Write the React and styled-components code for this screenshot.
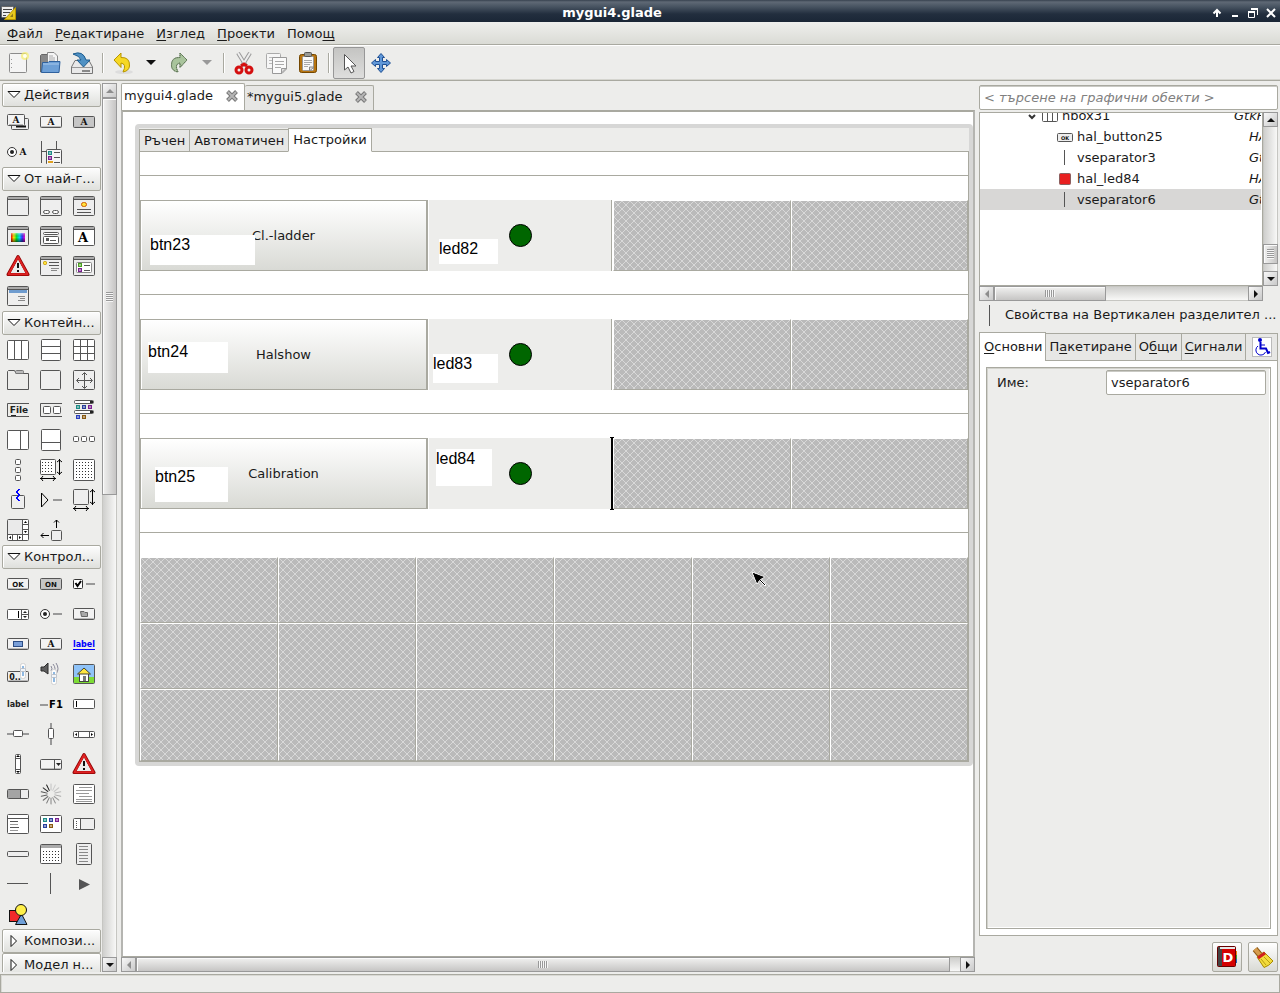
import React from "react";
import styled, { createGlobalStyle, css } from "styled-components";

const edge = "#a9a9a0";
const face = "#ededeb";
const raised = "linear-gradient(#ffffff, #d9dad5)";

const Global = createGlobalStyle`
  * { box-sizing: border-box; }
  body { margin: 0; background: ${face}; }
  body, button, input {
    font-family: "DejaVu Sans", sans-serif;
    font-size: 13px;
    line-height: 16px;
    color: #1a1a1a;
  }
  button { padding: 0; margin: 0; border: 0; background: none; cursor: default; }
  svg { display: block; flex: none; }
`;

/* ---------- window chrome ---------- */
const Window = styled.div`
  display: flex;
  flex-direction: column;
  height: 100vh;
  overflow: hidden;
  background: ${face};
`;
const TitleBar = styled.header`
  display: flex;
  align-items: center;
  height: 22px;
  flex: none;
  padding-top: 3px;
  background: linear-gradient(#37424f 0, #5f6975 2px, #465260 7px, #222e3e 14px, #1a2636 22px);
`;
const Title = styled.h1`
  flex: 1;
  margin: 0;
  text-align: center;
  font-size: 13px;
  font-weight: bold;
  color: #fff;
`;
const WindowButton = styled.button`
  display: grid;
  place-items: center;
  width: 18px;
  height: 18px;
`;
const MenuBar = styled.nav`
  display: flex;
  align-items: center;
  gap: 12px;
  height: 23px;
  flex: none;
  padding: 2px 0 0 7px;
  background: linear-gradient(#efefed, #dadbd5);
  border-bottom: 1px solid ${edge};
`;
const Mnemonic = styled.span`
  text-decoration: underline;
  text-underline-offset: 2px;
`;
const ToolBar = styled.div`
  display: flex;
  align-items: center;
  height: 36px;
  flex: none;
  padding: 0 2px;
  border-top: 1px solid #fff;
  border-bottom: 1px solid ${edge};
  box-shadow: inset 0 -1px #d5d5cf;
`;
const Tool = styled.button`
  display: grid;
  place-items: center;
  width: 32px;
  height: 32px;
  ${(p) => p.$on && css`
    background: linear-gradient(#c4c4c2, #dededd);
    border: 1px solid #979797;
    border-radius: 2px;
  `}
`;
const DropArrow = styled(Tool)`
  width: 24px;
`;
const ToolDivider = styled.i`
  width: 2px;
  height: 20px;
  margin: 0 3px 0 4px;
  background: ${edge};
  border-right: 1px solid #fff;
`;
const Main = styled.main`
  flex: 1;
  min-height: 0;
  display: flex;
  gap: 4px;
  padding: 2px 2px 0;
`;
const StatusBar = styled.footer`
  height: 19px;
  flex: none;
  margin-top: 2px;
  border: 1px solid ${edge};
  box-shadow: inset 1px 1px #d9d9d4;
`;

/* ---------- scroll bars ---------- */
const Track = styled.div`
  display: flex;
  flex: none;
  flex-direction: ${(p) => (p.$vertical ? "column" : "row")};
  ${(p) => (p.$vertical ? "width" : "height")}: 15px;
  background: linear-gradient(${(p) => (p.$vertical ? "to right" : "to bottom")}, #cfcfcd, #f8f8f7);
  border: 1px solid #c6c6c2;
`;
const Arrow = styled.button`
  display: grid;
  place-items: center;
  flex: none;
  width: 15px;
  height: 15px;
  margin: -1px;
  border: 1px solid #999;
  background: linear-gradient(135deg, #f8f8f8, #c9c9c9);
`;
const Thumb = styled.div`
  display: grid;
  place-items: center;
  flex: ${(p) => p.$grow};
  margin: ${(p) => (p.$vertical ? "1px -1px" : "-1px 1px")};
  border: 1px solid #999;
  box-shadow: inset 1px 1px #fbfbfb;
  background: linear-gradient(${(p) => (p.$vertical ? "to right" : "to bottom")}, #f1f1f0, #c6c5c4);
`;
const Grip = styled.i`
  ${(p) => p.$vertical
    ? css`width: 7px; height: 10px; background: repeating-linear-gradient(#999 0 1px, #f6f6f6 1px 2px);`
    : css`width: 10px; height: 7px; background: repeating-linear-gradient(to right, #999 0 1px, #f6f6f6 1px 2px);`}
`;
const Space = styled.i`
  flex: ${(p) => p.$grow};
`;
const arrowPath = {
  up: "M0 6L4 2L8 6Z",
  down: "M0 2L4 6L8 2Z",
  left: "M6 0L2 4L6 8Z",
  right: "M2 0L6 4L2 8Z",
};
function ArrowButton({ dir, off }) {
  return (
    <Arrow aria-label={dir}>
      <svg width="8" height="8"><path d={arrowPath[dir]} fill={off ? "#8d8d8d" : "#111"} /></svg>
    </Arrow>
  );
}
function ScrollBar({ vertical, before = 0, size, after, startOff = true }) {
  return (
    <Track $vertical={vertical}>
      <ArrowButton dir={vertical ? "up" : "left"} off={startOff} />
      {before > 0 && <Space $grow={before} />}
      <Thumb $vertical={vertical} $grow={size}><Grip $vertical={vertical} /></Thumb>
      <Space $grow={after} />
      <ArrowButton dir={vertical ? "down" : "right"} />
    </Track>
  );
}

/* ---------- palette ---------- */
const PaletteArea = styled.aside`
  display: flex;
  flex: none;
  width: 115px;
`;
const Palette = styled.div`
  width: 100px;
  overflow: hidden;
`;
const GroupButton = styled.button`
  display: flex;
  align-items: center;
  gap: 3px;
  width: 99px;
  height: 24px;
  padding: 0 4px;
  border: 1px solid ${edge};
  border-radius: 2px;
  box-shadow: inset 1px 1px #fff;
  background: linear-gradient(#fdfdfd, #dfe0dc);
  white-space: nowrap;
`;
const IconGrid = styled.div`
  display: grid;
  grid-template-columns: repeat(3, 33px);
  grid-auto-rows: 30px;
`;
const PaletteItem = styled.button`
  padding: 3px 4px;
`;

const g = "#555";
const R = (x, y, w, h, fill = "#eee", stroke = g, rx = 1) => (
  <rect x={x + 0.5} y={y + 0.5} width={w - 1} height={h - 1} fill={fill} stroke={stroke} rx={rx} />
);
const F = (x, y, w, h, fill = g) => <rect x={x} y={y} width={w} height={h} fill={fill} />;
const T = (x, y, s, t, fill = "#111", fam = "DejaVu Sans") => (
  <text x={x} y={y} fontSize={s} fontWeight="bold" fontFamily={fam} textAnchor="middle" fill={fill}>{t}</text>
);
const L = (d, stroke = g, w = 1) => <path d={d} fill="none" stroke={stroke} strokeWidth={w} />;
const Win = (fill = "#eee") => <>{R(1, 2, 22, 20, fill)}{F(2, 3, 20, 2, "#aaa")}{F(2, 5, 20, 1)}</>;
const Btn = (fill = "#f2f2f2") => <>{R(1, 6, 22, 12, fill)}{F(2, 16, 20, 1, "#bbb")}</>;
const Dots = (x, y, w, h) => {
  const out = [];
  for (let j = y; j < y + h; j += 3) for (let i = x; i < x + w; i += 3) out.push(<rect key={i + "-" + j} x={i} y={j} width="1" height="1" fill="#333" />);
  return out;
};
const Chip = (x, y, c) => <rect x={x + 0.5} y={y + 0.5} width="3" height="3" fill={c} fillOpacity="0.5" stroke={c} />;
const warning = (
  <>
    <path d="M12 2.5L22 20.5H2Z" fill="#e7e7e7" stroke="#8e0000" strokeWidth="3" strokeLinejoin="round" />
    <path d="M12 3L21.500 20.300H2.500Z" fill="none" stroke="#dd2222" strokeWidth="2" strokeLinejoin="round" />
    <path d="M12 6L18.500 18.500H5.500Z" fill="#ececec" />
    {F(11, 9, 2, 5, "#111")}{F(11, 16, 2, 2, "#111")}
  </>
);
const HArrows = (x1, x2, y) => L(`M${x1} ${y}.5H${x2}M${x1 + 3} ${y - 2}L${x1 + 1} ${y}.5L${x1 + 3} ${y + 3}M${x2 - 3} ${y - 2}L${x2 - 1} ${y}.5L${x2 - 3} ${y + 3}`, "#000");
const VArrows = (x, y1, y2) => L(`M${x}.5 ${y1}V${y2}M${x - 2} ${y1 + 3}L${x}.5 ${y1 + 1}L${x + 3} ${y1 + 3}M${x - 2} ${y2 - 3}L${x}.5 ${y2 - 1}L${x + 3} ${y2 - 3}`, "#000");
const chips = (x, y) => <>{Chip(x, y, "#1d8c86")}{Chip(x + 6, y, "#2a3f9d")}{Chip(x + 12, y, "#7a2090")}</>;
const slider = <>{R(14, 1, 6, 16, "#fcfcfc", "#d2d2d2", 2)}{F(16, 4, 2, 10, "#8fb9e2")}{R(14, 6, 6, 4, "#f2f5f9", "#b5bcc6")}</>;

const actions = [
  ["Action group", <>{R(5, 8, 18, 12)}{L("M10 16.500H20", "#111", 2)}{R(1, 4, 18, 12, "#f4f4f4")}{F(3, 14, 14, 1, "#bbb")}{T(10, 13, 9, "A", "#111", "DejaVu Serif")}</>],
  ["Action", <>{Btn()}{T(12, 15, 9, "A", "#111", "DejaVu Serif")}</>],
  ["Toggle action", <>{Btn("#c6c6c6")}{T(12, 15, 9, "A", "#111", "DejaVu Serif")}</>],
  ["Radio action", <><circle cx="6" cy="12" r="4.500" fill="#fff" stroke="#333" /><circle cx="6" cy="12" r="2" fill="#222" />{T(17, 15, 9, "A", "#111", "DejaVu Serif")}</>],
  ["Recent action", <>{L("M2.500 1V23M17.500 1V9M2.500 11.500H8")}{R(7, 9, 16, 16, "#f5f5f5")}{Chip(9, 11, "#1d8c86")}{Chip(9, 16, "#7a2090")}{F(9, 21, 5, 2, "#e0a020")}{F(15, 12, 6, 1)}{F(15, 17, 6, 1)}{F(15, 22, 6, 1)}</>],
];
const toplevels = [
  ["Window", Win()],
  ["Dialog", <>{Win()}{R(4, 16, 7, 4, "#fff", g, 2)}{R(13, 16, 7, 4, "#fff", g, 2)}</>],
  ["About dialog", <>{Win()}{R(9, 8, 6, 5, "#ffe23c", "#d05a00", 2)}{F(5, 15, 14, 1)}{F(5, 18, 14, 1)}</>],
  ["Color dialog", <>{Win()}<defs><linearGradient id="hue"><stop offset="0" stopColor="#f00" /><stop offset=".2" stopColor="#fe0" /><stop offset=".4" stopColor="#0e3" /><stop offset=".6" stopColor="#0df" /><stop offset=".8" stopColor="#33f" /><stop offset="1" stopColor="#f0c" /></linearGradient><linearGradient id="dark" x2="0" y2="1"><stop offset="0" stopColor="#fff" stopOpacity=".5" /><stop offset=".5" stopColor="#000" stopOpacity="0" /><stop offset="1" stopColor="#000" stopOpacity=".6" /></linearGradient></defs><rect x="5" y="9" width="14" height="9" fill="url(#hue)" /><rect x="5" y="9" width="14" height="9" fill="url(#dark)" /></>],
  ["File dialog", <>{Win()}{R(4, 8, 16, 3, "#fff")}{R(4, 12, 16, 8, "#fff")}{F(7, 14, 3, 3)}{F(11, 16, 6, 1)}</>],
  ["Font dialog", <>{Win("#fff")}{T(11, 18, 13, "A", "#000", "DejaVu Serif")}</>],
  ["Message dialog", warning],
  ["Recent dialog", <>{Win()}{R(4, 7, 4, 4, "#ffe23c", "#c79a00")}{F(10, 8, 10, 1)}{F(10, 11, 10, 1)}{F(12, 14, 8, 1, "#888")}{F(12, 16, 6, 1, "#888")}</>],
  ["Chooser dialog", <>{Win()}{R(4, 8, 16, 11, "#fff", "#888")}{Chip(6, 9, "#4aa020")}{Chip(6, 14, "#7a2090")}{F(12, 11, 6, 1)}{F(12, 16, 6, 1)}</>],
  ["Assistant", <>{Win()}{F(3, 6, 18, 3, "#6f9ccf")}{F(12, 12, 7, 1, "#888")}{F(14, 14, 5, 1, "#888")}{F(12, 16, 7, 1, "#888")}</>],
];
const containers = [
  ["Horizontal box", <>{R(1, 2, 22, 20, "#fff")}{L("M8.500 2V22M15.500 2V22")}</>],
  ["Vertical box", <>{R(2, 1, 20, 22, "#fff")}{L("M2 8.500H22M2 15.500H22")}</>],
  ["Table", <>{R(1, 1, 22, 22, "#fff")}{L("M8.500 1V23M15.500 1V23M1 8.500H23M1 15.500H23")}</>],
  ["Notebook", <>{L("M1.500 21V3.500L2.500 2.500H8.500L10 5.500H22.500V21.500H1.500Z")}{R(9, 2, 9, 4, "#bbb", "#777")}</>],
  ["Frame", R(1, 2, 21, 20)],
  ["Aspect frame", <>{R(1, 2, 22, 20)}{L("M12.500 5V20M5 12.500H20M10 7L12.500 4.500L15 7M10 18L12.500 20.500L15 18M7 10L4.500 12.500L7 15M18 10L20.500 12.500L18 15")}</>],
  ["Menu bar", <>{L("M23 5.500H1.500V18.500H23")}{T(13, 15, 9, "File", "#222")}{F(5, 17, 5, 1, "#222")}</>],
  ["Tool bar", <>{L("M23 5.500H1.500V18.500H23")}{R(4, 8, 8, 8, "#fff")}{R(14, 8, 8, 8, "#fff")}</>],
  ["Tool palette", <>{R(2, 2, 20, 4, "#fff")}{F(18, 3, 3, 2, "#222")}{chips(4, 7)}{R(2, 12, 20, 4, "#fff")}{F(18, 13, 3, 2, "#222")}{Chip(4, 17, "#2a3fbd")}{Chip(10, 17, "#8a5a10")}</>],
  ["Horizontal panes", <>{R(1, 2, 22, 20, "#fff")}{L("M14.500 2V22")}</>],
  ["Vertical panes", <>{R(2, 1, 20, 22, "#fff")}{L("M2 14.500H22")}</>],
  ["Horizontal button box", <>{R(1, 8, 6, 6, "#fff")}{R(9, 8, 6, 6, "#fff")}{R(17, 8, 6, 6, "#fff")}</>],
  ["Vertical button box", <>{R(9, 1, 6, 6, "#fff")}{R(9, 9, 6, 6, "#fff")}{R(9, 17, 6, 6, "#fff")}</>],
  ["Layout", <>{R(1, 1, 16, 16, "#fff")}{Dots(3, 4, 12, 12)}{HArrows(1, 17, 20)}{VArrows(20, 1, 17)}</>],
  ["Fixed", <>{R(1, 1, 22, 22, "#fff")}{Dots(4, 4, 17, 17)}</>],
  ["Event box", <>{R(5, 7, 14, 14)}{L("M13 1L10 4L13 7L10 10L13 13", "#00f", 1)}{L("M14 1L11 4L14 7L11 10L14 13", "#00f", 1)}</>],
  ["Expander", <>{L("M2.500 5V19L9 12Z", "#000")}{F(14, 11, 9, 2, "#999")}</>],
  ["Viewport", <>{R(1, 1, 16, 16)}{HArrows(1, 17, 20)}{VArrows(20, 1, 17)}</>],
  ["Scrolled window", <>{R(1, 1, 22, 22, "#fff")}{F(2, 2, 14, 14, "#eaeaea")}{L("M16.500 1V23M1 16.500H23M16.500 6.500H22M16.500 11.500H22M6.500 17V23M11.500 17V23")}<path d="M19.500 3L21 5H18ZM19.500 15L21 13H18ZM3 19.500L5 18V21ZM15 19.500L13 18V21Z" fill="#000" /></>],
  ["Alignment", <>{R(12, 12, 11, 11)}{L("M17.500 10V2M15 4.500L17.500 2L20 4.500M10 17.500H2M4.500 15L2 17.500L4.500 20", "#000")}</>],
];
const controls = [
  ["Button", <>{Btn()}{T(12, 15, 7, "OK")}</>],
  ["Toggle button", <>{Btn("#c6c6c6")}{T(12, 15, 7, "ON")}</>],
  ["Check button", <>{R(1, 7, 10, 10, "#fff", "#333")}{L("M3.500 11L5.500 14L9 9", "#000", 2)}{F(14, 11, 9, 2, "#999")}</>],
  ["Spin button", <>{R(1, 7, 22, 11, "#fff")}{F(12, 9, 1, 7, "#000")}{L("M15.500 7V18M15.500 12.500H23")}<path d="M17 11L19 9L21 11ZM17 14L19 16L21 14Z" fill="#222" /></>],
  ["Radio button", <><circle cx="6" cy="12" r="4.500" fill="#fff" stroke="#333" /><circle cx="6" cy="12" r="2" fill="#222" />{F(14, 11, 9, 2, "#999")}</>],
  ["File chooser button", <>{Btn()}<path d="M8.500 9.500H12L13 10.500H15.500V14.500H9.500Z" fill="#aaa" stroke="#666" /></>],
  ["Color button", <>{Btn()}{R(7, 9, 10, 6, "#7a9fd8", "#2c4d85", 0)}</>],
  ["Font button", <>{Btn()}{T(12, 15, 9, "A", "#111", "DejaVu Serif")}</>],
  ["Link button", <>{T(12, 15, 8, "label", "#00f")}{F(1, 17, 22, 1, "#00f")}</>],
  ["Scale button", <>{R(1, 9, 22, 11)}{F(2, 18, 20, 1, "#bbb")}{T(9, 18, 8, "0..")}{slider}</>],
  ["Volume button", <><path d="M2 5H5L9 1V12L5 9H2Z" fill="#5f5f5f" stroke="#2d2d2d" />{L("M12 4Q14 7 12 9M14 2Q18 7 14 11M17 1Q21 7 17 12", "#889")}<g transform="translate(-2 6)">{slider}</g></>],
  ["Image", <>{R(1, 2, 22, 20, "#8fc3f8")}{F(2, 15, 20, 6, "#7ddc36")}{R(7, 11, 10, 9, "#fff", "#444", 0)}<path d="M5.500 12L12 6L18.500 12Z" fill="#ffe640" stroke="#443" />{F(11, 14, 3, 5, "#777")}</>],
  ["Label", T(12, 15, 8, "label", "#222")],
  ["Accelerator label", <>{F(1, 12, 8, 2, "#999")}{T(17, 16, 10, "F1", "#000")}</>],
  ["Text entry", <>{R(1, 7, 22, 10, "#fff")}{F(4, 9, 1, 6, "#000")}</>],
  ["Horizontal scale", <>{F(1, 11, 22, 2, "#999")}{R(7, 8, 10, 7, "#fff")}</>],
  ["Vertical scale", <>{F(11, 1, 2, 22, "#999")}{R(9, 6, 6, 11, "#fff")}</>],
  ["Horizontal scrollbar", <>{R(1, 9, 22, 7, "#fff")}{L("M6.500 9V16M17.500 9V16")}<path d="M3 12.500L5 11V14ZM21 12.500L19 11V14Z" fill="#000" /></>],
  ["Vertical scrollbar", <>{R(9, 2, 6, 20, "#fff")}{L("M9 6.500H15M9 17.500H15")}<path d="M12 3L14 5H10ZM12 21L14 19H10Z" fill="#000" /></>],
  ["Combo box", <>{R(1, 7, 22, 11, "#f2f2f2")}{F(2, 16, 20, 1, "#bbb")}{L("M15.500 7V18")}<path d="M17 11H22L19.500 14Z" fill="#222" /></>],
  ["Info bar", warning],
  ["Progress bar", <>{R(1, 7, 22, 10)}{F(2, 8, 12, 8, "#a4a4a4")}{L("M14.500 7V17")}</>],
  ["Spinner", <g strokeLinecap="round">{[0, 1, 2, 3, 4, 5, 6, 7, 8, 9, 10, 11, 12, 13].map((i) => <path key={i} d="M12 8V2" stroke={`hsl(0 0% ${[76, 80, 78, 72, 66, 60, 56, 52, 48, 44, 38, 30, 20, 10][i]}%)`} strokeWidth="1" transform={`rotate(${i * 25.7} 12 12)`} />)}</g>],
  ["Text view", <>{R(1, 2, 22, 20, "#fff")}{F(7, 5, 13, 1, "#999")}{F(4, 8, 16, 1, "#999")}{F(4, 11, 13, 1, "#999")}{F(7, 14, 13, 1, "#999")}{F(4, 17, 16, 1, "#999")}{F(4, 19, 16, 1, "#999")}</>],
  ["Tree view", <>{R(1, 2, 22, 20, "#fff")}{L("M1 6.500H23")}{F(4, 9, 8, 1)}{F(4, 12, 8, 1, "#999")}{F(4, 15, 9, 1)}{F(4, 18, 8, 1, "#999")}</>],
  ["Icon view", <>{R(1, 3, 22, 18, "#fff")}{chips(4, 6)}{Chip(4, 12, "#2a3f9d")}{Chip(10, 12, "#8a5a10")}</>],
  ["Handle box", <>{R(1, 6, 22, 12)}{F(2, 7, 6, 10, "#fff")}{L("M8.500 6V18")}{F(4, 9, 1, 1)}{F(4, 11, 1, 1)}{F(4, 13, 1, 1)}{F(4, 15, 1, 1)}</>],
  ["Status bar", R(1, 9, 22, 6)],
  ["Calendar", <>{R(1, 2, 22, 20, "#fff")}{F(2, 3, 20, 3, "#aaa")}{Dots(4, 9, 17, 11)}</>],
  ["Popup menu", <>{R(4, 1, 16, 22)}{[4, 7, 10, 13, 16, 19].map((y) => <rect key={y} x="7" y={y} width="9" height="1" fill="#888" />)}</>],
  ["Horizontal separator", F(1, 11, 21, 1)],
  ["Vertical separator", F(11, 1, 1, 21)],
  ["Arrow", <path d="M7 7V18L18 12.500Z" fill={g} />],
  ["Drawing area", <>{R(3, 8, 12, 12, "#f02a2a", "#111", 0)}<path d="M15.500 12L21 22.500H9.500Z" fill="#6f9fd8" stroke="#111" /><circle cx="15" cy="8" r="5.500" fill="#fff04a" stroke="#111" /></>],
];
const groups = [
  ["Действия", actions],
  ["От най-г...", toplevels],
  ["Контейн...", containers],
  ["Контрол...", controls],
  ["Компози...", null],
  ["Модел н...", null],
];

function PaletteGroup({ name, items }) {
  return (
    <section>
      <GroupButton aria-expanded={!!items}>
        <svg width="14" height="14"><path d={items ? "M1 3.500H13L7 9.500Z" : "M4 1.500V12.500L9.500 7Z"} fill="#fff" stroke="#111" /></svg>
        {name}
      </GroupButton>
      {items && (
        <IconGrid>
          {items.map(([label, art]) => (
            <PaletteItem key={label} aria-label={label}>
              <svg width="24" height="24" viewBox="0 0 24 24">{art}</svg>
            </PaletteItem>
          ))}
        </IconGrid>
      )}
    </section>
  );
}

/* ---------- project workspace ---------- */
const Workspace = styled.section`
  flex: 1;
  min-width: 0;
  display: flex;
  flex-direction: column;
`;
const FileTabs = styled.div`
  display: flex;
  align-items: flex-end;
  height: 27px;
  flex: none;
`;
const FileTab = styled.div`
  display: flex;
  align-items: center;
  gap: 12px;
  height: ${(p) => (p.$active ? 27 : 25)}px;
  padding: 0 5px 2px 2px;
  border: 1px solid ${edge};
  border-left-width: ${(p) => (p.$active ? 1 : 0)}px;
  border-bottom: 0;
  border-radius: 2px 2px 0 0;
  background: ${(p) => (p.$active ? "#fff" : "#e7e7e5")};
`;
const TabName = styled.button``;
const CloseButton = styled.button`
  display: grid;
  place-items: center;
  width: 14px;
  height: 16px;
`;
const Viewport = styled.div`
  flex: 1;
  min-height: 0;
  display: flex;
  flex-direction: column;
  border: solid ${edge};
  border-width: 2px 2px 1px;
  border-color: ${edge} #b5b5b1;
`;
const Canvas = styled.div`
  position: relative;
  flex: 1;
  min-height: 0;
  overflow: hidden;
  padding: 12px 0 0 12px;
  background: #fff;
`;
const DesignWindow = styled.div`
  border: 4px solid #d7d7d6;
  border-radius: 4px;
  background: #fff;
`;
const DesignTabs = styled.div`
  display: flex;
  align-items: flex-end;
  height: 24px;
  background: ${face};
  box-shadow: inset 0 -1px ${edge};
`;
const DesignTab = styled.button`
  height: ${(p) => (p.$active ? 24 : 23)}px;
  padding: 0 4px;
  border: 1px solid ${edge};
  border-bottom-color: ${(p) => (p.$active ? "#fff" : edge)};
  border-right-width: ${(p) => (p.$active ? 1 : 0)}px;
  background: ${(p) => (p.$active ? "#fff" : "#e7e7e5")};
`;
const DesignPage = styled.div`
  border: 1px solid ${edge};
  border-top: 0;
`;
const Rule = styled.hr`
  height: 1px;
  margin: 0;
  border: 0;
  background: ${edge};
`;
const RuleSlot = styled.div`
  padding: 23px 0 24px;
`;
const HalRow = styled.div`
  display: grid;
  grid-template-columns: 287fr 2px 182fr 2px 178fr 177fr;
  height: 71px;
`;
const Cell = styled.div`
  position: relative;
  display: grid;
  background: ${face};
`;
const HalButton = styled.button`
  border: 1px solid ${edge};
  box-shadow: inset 1px 1px #fff;
  background: ${raised};
`;
const Led = styled.i`
  place-self: center;
  width: 23px;
  height: 23px;
  border: 1px solid #000;
  border-radius: 50%;
  background: #006600;
`;
const Note = styled.span`
  position: absolute;
  left: ${(p) => p.$x}px;
  top: ${(p) => p.$y}px;
  width: ${(p) => p.$w}px;
  height: ${(p) => p.$h}px;
  background: #fff;
  color: #000;
  font-family: "Liberation Sans", sans-serif;
  font-size: 16px;
  line-height: 20px;
`;
const Separator = styled.i`
  position: relative;
  background: ${edge};
  border-right: 1px solid #fff;
  ${(p) => p.$selected && css`
    &::after {
      content: "";
      position: absolute;
      top: -1px;
      bottom: -1px;
      left: -1px;
      width: 4px;
      background:
        linear-gradient(#000, #000) 0 0 / 4px 1px no-repeat,
        linear-gradient(#000, #000) 0 100% / 4px 1px no-repeat,
        linear-gradient(#000, #000) 1px 0 / 2px 100% no-repeat;
    }
  `}
`;
const Placeholder = styled.div`
  border: 1px solid;
  border-color: #fff ${edge} ${edge} #fff;
  background:
    linear-gradient(45deg, transparent 46%, #d8d8d8 46% 54%, transparent 54%) 0 0 / 8px 8px,
    linear-gradient(135deg, transparent 46%, #d8d8d8 46% 54%, transparent 54%) 0 0 / 8px 8px,
    #bababa;
`;
const EmptyTable = styled.div`
  display: grid;
  grid-template-columns: repeat(6, 1fr);
  grid-template-rows: 66px 66px 72px;
`;
const Pointer = styled.svg`
  position: absolute;
  left: 628px;
  top: 459px;
`;

const halRows = [
  { label: "Cl.-ladder", button: ["btn23", 10, 35, 105, 30], led: ["led82", 10, 39, 59, 25] },
  { label: "Halshow", button: ["btn24", 8, 23, 80, 31], led: ["led83", 4, 35, 65, 29] },
  { label: "Calibration", button: ["btn25", 15, 29, 73, 35], led: ["led84", 7, 11, 56, 37], selected: true },
];
function Annotation({ data: [text, x, y, w, h] }) {
  return <Note $x={x} $y={y} $w={w} $h={h}>{text}</Note>;
}
function CloseTab({ name }) {
  return (
    <CloseButton aria-label={`Close ${name}`}>
      <svg width="12" height="12"><path d="M1.500 1.500L10.500 10.500M10.500 1.500L1.500 10.500" stroke="#777" strokeWidth="4" /><path d="M2 2L10 10M10 2L2 10" stroke="#b5b5b5" strokeWidth="2" /></svg>
    </CloseButton>
  );
}

/* ---------- inspector ---------- */
const Inspector = styled.aside`
  display: flex;
  flex-direction: column;
  flex: none;
  width: 299px;
  padding-top: 2px;
`;
const Entry = styled.input`
  width: 100%;
  min-width: 0;
  height: 25px;
  padding: 0 4px;
  border: 1px solid ${edge};
  border-radius: 2px;
  box-shadow: inset 0 1px #c9c9c4;
  background: #fff;
  outline: 0;
  &::placeholder { color: #808080; opacity: 1; font-style: italic; }
`;
const TreeArea = styled.div`
  display: grid;
  grid-template-columns: 1fr 15px;
  grid-template-rows: 174px 15px;
  margin-top: 2px;
`;
const TreeBox = styled.div`
  overflow: hidden;
  padding-right: 1px;
  border: 1px solid ${edge};
  background: #fff;
`;
const TreeList = styled.ul`
  margin: -8px 0 0;
  padding: 0;
  list-style: none;
  overflow: hidden;
`;
const TreeRow = styled.li`
  display: flex;
  align-items: center;
  gap: 4px;
  height: 21px;
  padding-left: ${(p) => (p.$parent ? 46 : 77)}px;
  background: ${(p) => (p.$selected ? "#d8d7d6" : "transparent")};
`;
const TreeName = styled.span`
  flex: none;
  width: 168px;
`;
const TreeType = styled.span`
  flex: none;
  font-style: italic;
`;
const PropsTitle = styled.h2`
  display: flex;
  align-items: center;
  gap: 4px;
  height: 27px;
  flex: none;
  margin: 0;
  font-size: 13px;
  font-weight: normal;
  white-space: nowrap;
`;
const PropTabs = styled.div`
  display: flex;
  align-items: flex-end;
  height: 29px;
  flex: none;
  margin-top: 4px;
`;
const PropTab = styled.button`
  display: grid;
  place-items: center;
  height: ${(p) => (p.$active ? 29 : 28)}px;
  padding: 0 3px;
  white-space: nowrap;
  border: 1px solid ${edge};
  border-left-width: ${(p) => (p.$active ? 1 : 0)}px;
  border-bottom: ${(p) => (p.$active ? "0" : `1px solid ${edge}`)};
  background: ${(p) => (p.$active ? "#fff" : "#e7e7e5")};
  ${(p) => p.$active && "padding-left: 4px;"}
  flex: ${(p) => (p.$fill ? "1" : "none")};
`;
const TabLabel = styled.span`
  display: block;
`;
const PropPage = styled.div`
  flex: 1;
  display: flex;
  padding: 6px;
  border: 1px solid ${edge};
  border-top: 0;
  background: #fff;
`;
const PropFrame = styled.div`
  flex: 1;
  padding: 2px 4px 2px 10px;
  border: 1px solid ${edge};
  box-shadow: inset 1px 1px #d2d2cc, inset -1px -1px #fff;
  background: ${face};
`;
const Field = styled.label`
  display: grid;
  grid-template-columns: 1fr 160px;
  align-items: center;
`;
const ActionRow = styled.div`
  display: flex;
  justify-content: flex-end;
  gap: 6px;
  flex: none;
  padding-top: 6px;
`;
const ActionButton = styled.button`
  display: grid;
  place-items: center;
  width: 30px;
  height: 30px;
  border: 1px solid ${edge};
  border-radius: 2px;
  background: ${raised};
`;

const treeRows = [
  ["hbox31", "GtkHBox", "hbox"],
  ["hal_button25", "HAL_Button", "button"],
  ["vseparator3", "GtkVSeparator", "line"],
  ["hal_led84", "HAL_LED", "led"],
  ["vseparator6", "GtkVSeparator", "line"],
];
const treeIcons = {
  hbox: <>{R(0, 3, 16, 11, "#fff")}{L("M5.500 3V14M10.500 3V14")}</>,
  button: <>{R(0, 4, 16, 9)}{T(8, 11, 5, "OK")}</>,
  line: F(7, 0, 1, 15),
  led: R(2, 2, 12, 12, "#e82020", "#8a6060"),
};

const icons = {
  fresh: <>{R(3, 2, 18, 20, "#f4f4f4", "#8b8b8b")}{F(5, 8, 1, 1, "#999")}{F(5, 12, 1, 1, "#999")}{F(5, 16, 1, 1, "#999")}<circle cx="19" cy="5" r="4" fill="#f7ee6a" opacity=".7" /><circle cx="19" cy="5" r="2" fill="#fffff0" /></>,
  open: <><path d="M2.500 21V4.500L3.500 3.500H10V20Z" fill="#888" stroke="#666" /><path d="M9.500 12V1.500H16L19.500 5V12Z" fill="#f5f5f5" stroke="#888" />{L("M11 5H15M11 7H17M11 9H17", "#aaa")}<path d="M4.500 11.500L10 11.500L11 10.500H22L21 21.500H3.500Z" fill="#6d9fd6" stroke="#2f619e" />{L("M5 13H21", "#a8c8ec")}</>,
  save: <><path d="M5 9.500H19L22.500 16V22.500H1.500V16Z" fill="#e9e9e9" stroke="#777" />{L("M2 16.500H22", "#999")}{L("M12 20H20", "#888", 2)}<path d="M3 3Q13 -1 16 9H20L13.500 16L7 9H11Q10 5 3 3Z" fill="#4f91c4" stroke="#1c5c8f" /></>,
  undo: <><ellipse cx="13" cy="21" rx="9" ry="2" fill="#ddd" /><path d="M3 9L10 2V6.500Q19 6 18.500 15Q18 20 12 21Q16 13 10 12V16.500Z" fill="#f6d824" stroke="#b79500" /></>,
  redo: <><path d="M20 9L13 2V6.500Q4 6 4.500 15Q5 20 11 21Q7 13 13 12V16.500Z" fill="#a9c49c" stroke="#8a9a82" /><path d="M20 9L13 2V6.500Q4 6 4.500 15Q5 20 11 21Q7 13 13 12V16.500Z" fill="none" stroke="#4d6a42" strokeDasharray="1 1" /></>,
  cut: <>{L("M6 2L14 15", "#999", 4)}{L("M18 2L10 15", "#999", 4)}{L("M6 2L14 15M18 2L10 15", "#eee", 2)}<circle cx="7" cy="19" r="3" fill="none" stroke="#d40f0f" strokeWidth="3" /><circle cx="17" cy="19" r="3" fill="none" stroke="#d40f0f" strokeWidth="3" />{L("M9 15L12 13L15 15", "#d40f0f", 3)}</>,
  copy: <>{R(2, 2, 15, 16, "#f6f6f6", "#aaa")}{L("M5 6.500H13M5 9.500H10M5 12.500H10", "#bbb")}<path d="M8.500 6.500H22.500V18L18 22.500H8.500Z" fill="#fafafa" stroke="#999" />{L("M11 10.500H20M11 13.500H20M11 16.500H17", "#aaa")}<path d="M17.500 22V17.500H22Z" fill="#ddd" stroke="#999" /></>,
  paste: <>{R(3, 3, 18, 19, "#b77410", "#744700", 2)}{R(6, 5, 12, 15, "#fafafa", "#999")}{R(8, 1, 8, 5, "#999a95", "#555")}{L("M8 9.500H16M8 11.500H16M8 13.500H14M8 15.500H12", "#aaa")}<path d="M13.500 20V16H18Z" fill="#ddd" stroke="#888" /></>,
  pick: <path d="M7.500 3.500V19L11 16L14 22L17 20.500L14 15H19Z" fill="#fff" stroke="#555" />,
  move: <path d="M12 2.500L15.500 6.500H13.500V10.500H17.500V8.500L21.500 12L17.500 15.500V13.500H13.500V17.500H15.500L12 21.500L8.500 17.500H10.500V13.500H6.500V15.500L2.500 12L6.500 8.500V10.500H10.500V6.500H8.500Z" fill="#5f97d8" stroke="#1e4f93" />,
};
const Icon = ({ name }) => <svg width="24" height="24" viewBox="0 0 24 24">{icons[name]}</svg>;
const Drop = ({ off }) => <svg width="10" height="6"><path d="M0 0H10L5 5Z" fill={off ? "#999" : "#111"} /></svg>;

const menus = [["", "Ф", "айл"], ["", "Р", "едактиране"], ["", "И", "зглед"], ["", "П", "роекти"], ["Помо", "щ", ""]];
const Access = ({ parts: [a, b, c] }) => <TabLabel>{a}<Mnemonic>{b}</Mnemonic>{c}</TabLabel>;

export default function App() {
  return (
    <Window>
      <Global />
      <TitleBar>
        <svg width="16" height="16">{R(1, 1, 13, 12, "#eee", "#666")}{L("M3 4.500H12M3 7.500H10M3 10.500H6", "#444")}<path d="M15.500 2.500V14.500H4.500Z" fill="#e8c91e" stroke="#b89600" /><path d="M13 8.500V12H10Z" fill="#8f7b1c" /></svg>
        <Title>mygui4.glade</Title>
        <WindowButton aria-label="Shade"><svg width="10" height="10">{L("M5 9V2M1.500 5.500L5 2L8.500 5.500", "#fff", 2)}</svg></WindowButton>
        <WindowButton aria-label="Minimize"><svg width="10" height="10">{F(2, 7, 6, 2, "#fff")}</svg></WindowButton>
        <WindowButton aria-label="Restore"><svg width="10" height="10">{F(3, 0, 7, 2, "#fff")}{F(9, 0, 1, 7, "#fff")}{F(0, 3, 7, 2, "#fff")}{L("M0.500 3V9.500H6.500V3", "#fff")}</svg></WindowButton>
        <WindowButton aria-label="Close"><svg width="10" height="10">{L("M1 1L9 9M9 1L1 9", "#fff", 2)}</svg></WindowButton>
      </TitleBar>

      <MenuBar>
        {menus.map((m) => <button key={m.join("")}><Access parts={m} /></button>)}
      </MenuBar>

      <ToolBar>
        <Tool aria-label="New"><Icon name="fresh" /></Tool>
        <Tool aria-label="Open"><Icon name="open" /></Tool>
        <Tool aria-label="Save"><Icon name="save" /></Tool>
        <ToolDivider />
        <Tool aria-label="Undo"><Icon name="undo" /></Tool>
        <DropArrow aria-label="Undo list"><Drop /></DropArrow>
        <Tool aria-label="Redo"><Icon name="redo" /></Tool>
        <DropArrow aria-label="Redo list"><Drop off /></DropArrow>
        <ToolDivider />
        <Tool aria-label="Cut"><Icon name="cut" /></Tool>
        <Tool aria-label="Copy"><Icon name="copy" /></Tool>
        <Tool aria-label="Paste"><Icon name="paste" /></Tool>
        <ToolDivider />
        <Tool aria-label="Select" aria-pressed="true" $on><Icon name="pick" /></Tool>
        <Tool aria-label="Drag and resize"><Icon name="move" /></Tool>
      </ToolBar>

      <Main>
        <PaletteArea>
          <Palette>
            {groups.map(([name, items]) => <PaletteGroup key={name} name={name} items={items} />)}
          </Palette>
          <ScrollBar vertical size={396} after={463} />
        </PaletteArea>

        <Workspace>
          <FileTabs>
            <FileTab $active><TabName>mygui4.glade</TabName><CloseTab name="mygui4.glade" /></FileTab>
            <FileTab><TabName>*mygui5.glade</TabName><CloseTab name="mygui5.glade" /></FileTab>
          </FileTabs>
          <Viewport>
            <Canvas>
              <DesignWindow>
                <DesignTabs>
                  <DesignTab>Ръчен</DesignTab>
                  <DesignTab>Автоматичен</DesignTab>
                  <DesignTab $active>Настройки</DesignTab>
                </DesignTabs>
                <DesignPage>
                  <RuleSlot><Rule /></RuleSlot>
                  {halRows.map((row) => (
                    <React.Fragment key={row.label}>
                      <HalRow>
                        <Cell><HalButton>{row.label}</HalButton><Annotation data={row.button} /></Cell>
                        <Separator />
                        <Cell><Led /><Annotation data={row.led} /></Cell>
                        <Separator $selected={row.selected} />
                        <Placeholder />
                        <Placeholder />
                      </HalRow>
                      <RuleSlot><Rule /></RuleSlot>
                    </React.Fragment>
                  ))}
                  <EmptyTable>
                    {Array.from({ length: 18 }, (_, i) => <Placeholder key={i} />)}
                  </EmptyTable>
                </DesignPage>
              </DesignWindow>
              <Pointer width="18" height="18" viewBox="0 0 18 18">
                <path d="M1 1L6 13L8.500 9.500L14 15L15 14L9.500 8.500L13.500 6Z" fill="#000" stroke="#fff" />
                <path d="M2 2L6 12L8 9L9 8L13 6Z" fill="#000" />
                <path d="M8 8L14 14" stroke="#000" />
              </Pointer>
            </Canvas>
          </Viewport>
          <ScrollBar size={813} after={10} />
        </Workspace>

        <Inspector>
          <Entry aria-label="Търсене" placeholder="< търсене на графични обекти >" />
          <TreeArea>
            <TreeBox>
              <TreeList>
                {treeRows.map(([name, type, kind], i) => (
                  <TreeRow key={name} $parent={i === 0} $selected={i === 4}>
                    {i === 0 && <svg width="12" height="12">{L("M3 5L6 8L9 5", "#333", 2)}</svg>}
                    <svg width="16" height="16">{treeIcons[kind]}</svg>
                    <TreeName>{name}</TreeName>
                    <TreeType>{type}</TreeType>
                  </TreeRow>
                ))}
              </TreeList>
            </TreeBox>
            <ScrollBar vertical before={118} size={18} after={7} startOff={false} />
            <ScrollBar size={111} after={143} />
          </TreeArea>
          <PropsTitle>
            <svg width="22" height="22">{F(10, 1, 1, 21)}</svg>
            Свойства на Вертикален разделител ...
          </PropsTitle>
          <PropTabs>
            <PropTab $active><Access parts={["", "О", "сновни"]} /></PropTab>
            <PropTab><Access parts={["П", "а", "кетиране"]} /></PropTab>
            <PropTab><Access parts={["О", "б", "щи"]} /></PropTab>
            <PropTab><Access parts={["", "С", "игнали"]} /></PropTab>
            <PropTab $fill aria-label="Accessibility">
              <svg width="20" height="20">
                {R(0, 0, 20, 20, "#fff", "#bbb", 0)}
                <circle cx="8" cy="3" r="2" fill="#00c" />
                {L("M8.500 5V11.500H14L16 16L18 15", "#00c", 2)}
                {L("M9 8H13", "#00c")}
                {L("M6 9A5 5 0 1 0 13.500 15", "#00c")}
              </svg>
            </PropTab>
          </PropTabs>
          <PropPage>
            <PropFrame>
              <Field>Име:<Entry defaultValue="vseparator6" /></Field>
            </PropFrame>
          </PropPage>
          <ActionRow>
            <ActionButton aria-label="Documentation">
              <svg width="24" height="24">
                {F(19, 6, 3, 4, "#f08010")}{F(19, 10, 3, 4, "#38a030")}{F(19, 14, 3, 4, "#2060c0")}
                {R(2, 1, 19, 21, "#d40000", "#600")}{F(3, 2, 4, 19, "#444")}{F(5, 2, 15, 2, "#e8e8e8")}
                {T(13, 17, 13, "D", "#fff")}
              </svg>
            </ActionButton>
            <ActionButton aria-label="Reset">
              <svg width="24" height="24">
                {L("M4 4L9 10", "#8f5a14", 6)}{L("M4 4L9 10", "#d59b4c", 4)}
                <path d="M6 12L13 7L22 16Q18 21 13 22.500Z" fill="#f3dc3c" stroke="#a88a00" />
                {L("M7 13L14 8", "#d02020", 3)}
                {L("M10 14L15 20M13 12L19 18", "#b89c10")}
              </svg>
            </ActionButton>
          </ActionRow>
        </Inspector>
      </Main>
      <StatusBar />
    </Window>
  );
}
